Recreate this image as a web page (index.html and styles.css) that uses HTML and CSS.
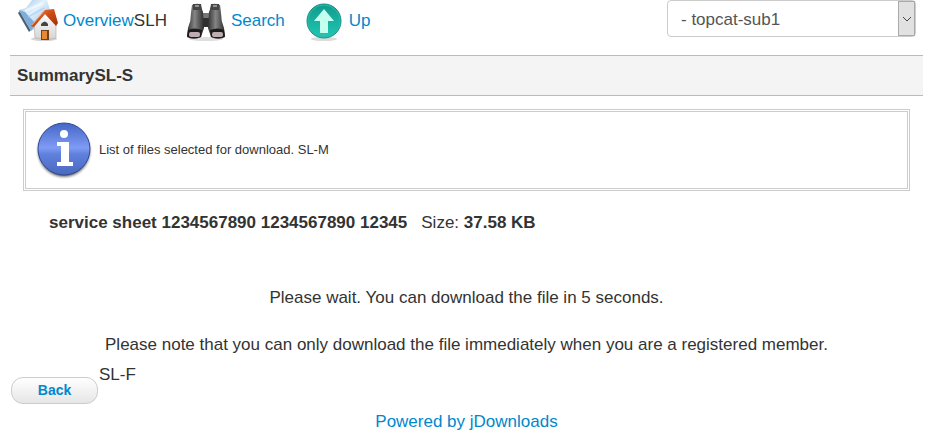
FILE: index.html
```
<!DOCTYPE html>
<html lang="en">
<head>
  <meta charset="UTF-8" />
  <meta name="viewport" content="width=device-width, initial-scale=1.0"/>
  <title>Summary</title>
  <link rel="stylesheet" href="styles.css">
</head>
<body>
  <div class="container">
    <!-- Top navigation -->
    <header class="topbar">
      <nav class="nav">
        <div class="nav-item">
          <svg class="nav-icon" viewBox="0 0 42 42" aria-hidden="true">
            <defs>
              <linearGradient id="folder" x1="0" y1="0" x2="1" y2="1">
                <stop offset="0" stop-color="#9cc4ea"/>
                <stop offset="0.4" stop-color="#e2f1fc"/>
                <stop offset="1" stop-color="#7fb2e2"/>
              </linearGradient>
              <linearGradient id="roof" x1="0" y1="0" x2="1" y2="1">
                <stop offset="0" stop-color="#f08a50"/>
                <stop offset="0.5" stop-color="#cf4a14"/>
                <stop offset="1" stop-color="#9c3008"/>
              </linearGradient>
              <linearGradient id="wall" x1="0" y1="0" x2="0" y2="1">
                <stop offset="0" stop-color="#ffffff"/>
                <stop offset="1" stop-color="#d5d3d2"/>
              </linearGradient>
            </defs>
            <ellipse cx="27" cy="39" rx="13" ry="2" fill="#d5d5d5"/>
            <path d="M1 13 L4 10 L14 30 L12 32 Z" fill="#4f6070"/>
            <path d="M2 10 L9 8 L15 0 H30 L35 17 L14 31 Z" fill="url(#folder)"/>
            <path d="M2 10 L8 12 L19 24 L14 31 Z" fill="#7fadd9"/>
            <path d="M8 11 L26 3" stroke="#f6fbff" stroke-width="3" stroke-opacity="0.7"/>
            <path d="M11 17 L27 8" stroke="#a5cbee" stroke-width="2" stroke-opacity="0.6"/>
            <path d="M17 25 L28 13 L39 25 L39 38 L30 40 L18 38 Z" fill="url(#wall)" stroke="#aaa" stroke-width="0.6"/>
            <path d="M28 10 L37 9 L41 23 L39 26 L28 14 L17 27 L14 26 Z" fill="url(#roof)"/>
            <path d="M28 10 L15 25" stroke="#f3a070" stroke-width="1"/>
            <path d="M24 26 V24 Q28 19 31 24 V26 Z" fill="#444"/>
            <path d="M24 30 H32 V40 H24 Z" fill="#71401f"/>
            <path d="M25 31 H30 V39 H25 Z" fill="#e88834"/>
          </svg>
          <span><a href="#">Overview</a>SLH</span>
        </div>
        <div class="nav-item">
          <svg class="nav-icon" viewBox="0 0 42 42" aria-hidden="true">
            <defs>
              <linearGradient id="barrel" x1="0" y1="0" x2="1" y2="0">
                <stop offset="0" stop-color="#333"/>
                <stop offset="0.45" stop-color="#858585"/>
                <stop offset="1" stop-color="#2c2c2c"/>
              </linearGradient>
            </defs>
            <ellipse cx="21" cy="39" rx="17" ry="2" fill="#dedede"/>
            <rect x="15" y="13" width="12" height="14" rx="1" fill="#303030"/>
            <path d="M18 13 H24 V18 H18 Z" fill="#777"/>
            <path d="M7 5 Q11 3 15 4 L18 12 L19 28 L16 37 Q8 41 2 36 L3 28 Q6 21 6 13 Z" fill="url(#barrel)"/>
            <path d="M35 5 Q31 3 27 4 L24 12 L23 28 L26 37 Q34 41 40 36 L39 28 Q36 21 36 13 Z" fill="url(#barrel)"/>
            <path d="M8 4 H16 L17 10 H8 Z M26 4 H34 L34 10 H25 Z" fill="#454545"/>
            <path d="M10 6 H14 M28 6 H32" stroke="#929292" stroke-width="2"/>
            <path d="M3 30 Q9 27 17 30 L16 37 Q8 40 2 37 Z M39 30 Q33 27 25 30 L26 37 Q34 40 40 37 Z" fill="#1c1c1c"/>
            <rect x="4" y="32" width="11" height="5" rx="2" fill="#bdacb0"/>
            <rect x="27" y="32" width="11" height="5" rx="2" fill="#bdacb0"/>
          </svg>
          <a href="#">Search</a>
        </div>
        <div class="nav-item">
          <svg class="nav-icon" viewBox="0 0 42 42" aria-hidden="true">
            <defs>
              <linearGradient id="disc" x1="0" y1="0" x2="0" y2="1">
                <stop offset="0" stop-color="#11998c"/>
                <stop offset="1" stop-color="#20c9b4"/>
              </linearGradient>
            </defs>
            <ellipse cx="21" cy="39" rx="13" ry="2" fill="#dcdcdc"/>
            <circle cx="21" cy="21" r="17" fill="url(#disc)" stroke="#128d83" stroke-width="1"/>
            <circle cx="21" cy="21" r="16" fill="none" stroke="#2fb8a8" stroke-width="1"/>
            <path d="M21 9 L31 21 H25 V33 H17 V21 H11 Z" fill="#c5fff0"/>
          </svg>
          <a href="#">Up</a>
        </div>
      </nav>
      <div class="category">
        <select class="category-select" aria-label="Category">
          <option>- topcat-sub1</option>
        </select>
        <span class="category-arrow">
          <svg viewBox="0 0 10 6" width="10" height="6" aria-hidden="true">
            <path d="M1 1 L5 5 L9 1" fill="none" stroke="#444" stroke-width="1"/>
          </svg>
        </span>
      </div>
    </header>

    <!-- Summary -->
    <h1 class="title">Summary<span class="title-tag">SL-S</span></h1>

    <main class="main">
      <div class="info">
        <svg class="info-icon" viewBox="0 0 60 60" aria-hidden="true">
          <defs>
            <linearGradient id="ball" x1="0" y1="0" x2="0" y2="1">
              <stop offset="0" stop-color="#4466c4"/>
              <stop offset="0.48" stop-color="#7f9cf5"/>
              <stop offset="0.6" stop-color="#5f80dc"/>
              <stop offset="1" stop-color="#4a69c0"/>
            </linearGradient>
            <radialGradient id="ballShadow">
              <stop offset="0.85" stop-color="#777"/>
              <stop offset="1" stop-color="#fff" stop-opacity="0"/>
            </radialGradient>
          </defs>
          <circle cx="30" cy="31" r="29" fill="url(#ballShadow)"/>
          <circle cx="30" cy="29" r="26" fill="url(#ball)" stroke="#2f4a94" stroke-width="1"/>
          <circle cx="30" cy="14" r="4" fill="#fff"/>
          <path d="M23 22 H35 V42 H39 V46 H23 V42 H27 V26 H23 Z" fill="#fff"/>
        </svg>
        <p class="info-text">List of files selected for download. SL-M</p>
      </div>
      <p class="file"><strong>service sheet 1234567890 1234567890 12345</strong><span class="file-size">Size: <strong>37.58 KB</strong></span></p>
      <p class="wait">Please wait. You can download the file in <span id="seconds">5</span> seconds.</p>
      <p class="note">Please note that you can only download the file immediately when you are a registered member.</p>
    </main>

    <!-- Footer -->
    <div class="actions">
      <button class="back" type="button" onclick="history.back()">Back</button>
      <span>SL-F</span>
    </div>
    <footer class="footer"><a href="#">Powered by jDownloads</a></footer>
  </div>
</body>
</html>
```
FILE: styles.css
```
body {
  margin: 0;
  font-family: "Liberation Sans", Arial, Helvetica, sans-serif;
  font-size: 17px;
  line-height: 30px;
  color: #333;
  background-color: #fff;
}

a {
  color: #08c;
  text-decoration: none;
}

a:hover {
  text-decoration: underline;
}

p {
  margin: 0;
}

.container {
  padding: 0 13px 0 10px;
}

.topbar {
  display: flex;
  justify-content: space-between;
  align-items: flex-start;
  height: 55px;
  padding: 0 7px;
}

.nav {
  display: flex;
  gap: 18px;
}

.nav-item {
  display: flex;
  gap: 4px;
  line-height: 42px;
}

.nav-icon {
  width: 42px;
  height: 42px;
}

.category {
  position: relative;
  width: 249px;
}

.category-select {
  appearance: none;
  display: block;
  box-sizing: border-box;
  width: 100%;
  height: 37px;
  padding: 2px 24px 0 13px;
  border: 1px solid #ccc;
  border-radius: 4px;
  background-color: #fff;
  color: #555;
  font-family: inherit;
  font-size: 17px;
}

.category-arrow {
  position: absolute;
  top: 1px;
  right: 1px;
  bottom: 1px;
  display: flex;
  align-items: center;
  justify-content: center;
  width: 15px;
  border: 1px solid #aaa;
  background-color: #e1e1e1;
  pointer-events: none;
}

.title {
  margin: 0;
  padding: 0 7px;
  border-top: 1px solid #bbb;
  border-bottom: 1px solid #bbb;
  background-color: #f4f4f4;
  font-size: 17px;
  line-height: 39px;
}

.main {
  padding: 13px 13px 0;
}

.info {
  display: flex;
  align-items: center;
  gap: 5px;
  padding: 8px;
  border: 3px double #ccc;
}

.info-icon {
  width: 60px;
  height: 60px;
}

.info-text {
  font-size: 13px;
  line-height: 20px;
}

.file {
  margin: 17px 26px 0;
}

.file-size {
  margin-left: 14px;
}

.wait {
  margin-top: 45px;
  text-align: center;
}

.note {
  margin-top: 17px;
  text-align: center;
}

.actions {
  display: flex;
  align-items: flex-start;
  gap: 1px;
  padding-left: 1px;
}

.back {
  width: 87px;
  height: 27px;
  margin-top: 17px;
  padding: 0 0 2px;
  border: 1px solid #ccc;
  border-radius: 12px;
  background: linear-gradient(#fff, #e6e6e6);
  color: #08c;
  font-family: inherit;
  font-size: 14px;
  font-weight: bold;
  cursor: pointer;
}

.footer {
  margin-top: 3px;
  text-align: center;
}
```
